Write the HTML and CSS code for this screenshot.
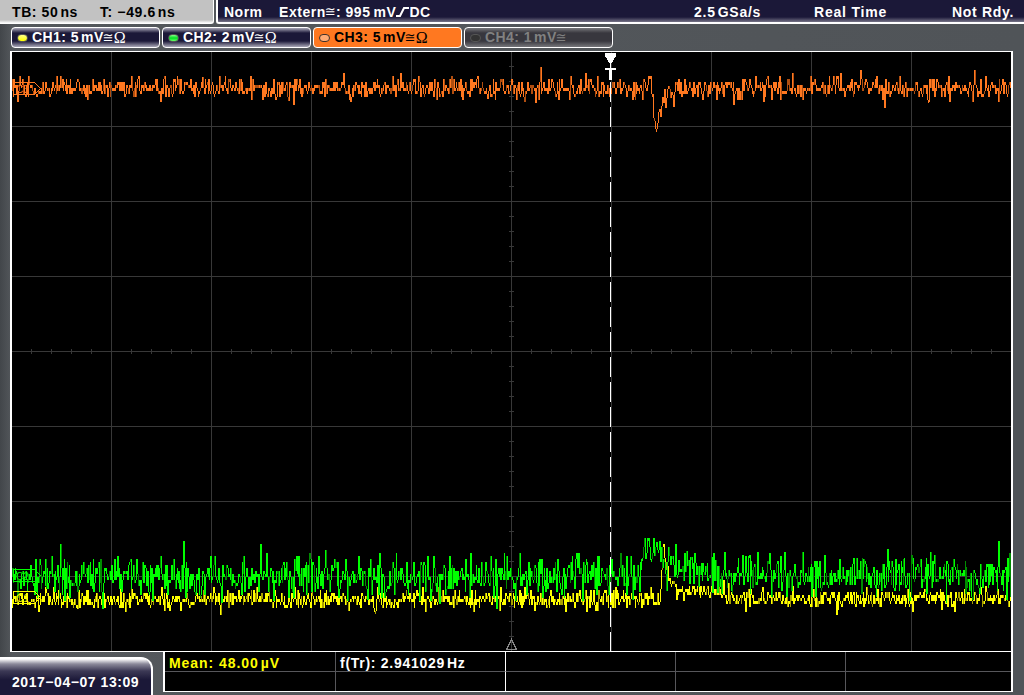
FILE: index.html
```html
<!DOCTYPE html>
<html lang="en">
<head>
<meta charset="utf-8">
<title>Oscilloscope</title>
<link rel="stylesheet" href="styles.css">
</head>
<body>
<div class="scope">
  <header class="status">
    <div class="timebase"><span class="tb">TB: 50<i></i>ns</span><span class="tpos">T: −49.6<i></i>ns</span></div>
    <div class="trigger">
      <span class="mode">Norm</span>
      <span class="source">Extern<b class="cong">≅</b>: 995<i></i>mV<svg class="edge" width="13" height="12"><path d="M0 10H4L8 2H13" fill="none" stroke="#fff" stroke-width="2"/></svg>DC</span>
      <span class="rate">2.5<i></i>GSa/s</span>
      <span class="acq">Real Time</span>
      <span class="ready">Not Rdy.</span>
    </div>
  </header>
  <nav class="channels">
    <div class="channel ch1"><span class="led"></span><span>CH1: 5<i></i>mV</span><b class="cong">≅</b><b class="ohm">Ω</b></div>
    <div class="channel ch2"><span class="led"></span><span>CH2: 2<i></i>mV</span><b class="cong">≅</b><b class="ohm">Ω</b></div>
    <div class="channel ch3"><span class="led"></span><span>CH3: 5<i></i>mV</span><b class="cong">≅</b><b class="ohm">Ω</b></div>
    <div class="channel ch4"><span class="led"></span><span>CH4: 1<i></i>mV</span><b class="cong">≅</b></div>
  </nav>
  <main class="screen"><svg id="plot" width="999" height="599" viewBox="12 52 999 599" shape-rendering="crispEdges"></svg></main>
  <footer class="bottom">
    <div class="date">2017−04−07 13:09</div>
    <div class="measure">
      <div class="cell mean">Mean: 48.00<i></i>µV</div><div class="cell freq">f(Tr): 2.941029<i></i>Hz</div><div class="cell"></div><div class="cell"></div><div class="cell last"></div>
      <div class="cell low"></div><div class="cell low freq"></div><div class="cell low"></div><div class="cell low"></div><div class="cell low last"></div>
    </div>
  </footer>
</div>
<script src="plot.js"></script>
</body>
</html>
```
FILE: styles.css
```css
* { box-sizing: border-box; }
body { margin: 0; background: #505458; font: bold 14px "Liberation Sans", Arial, sans-serif; color: #fff; }
.scope { width: 1024px; height: 695px; overflow: hidden; display: flex; flex-direction: column; background: linear-gradient(90deg, #42464a 0, #54585c 12px, #505458 100%); }
i { display: inline-block; width: 2px; }
.status { height: 24px; flex: none; display: flex; gap: 2px; white-space: nowrap; line-height: 25px; letter-spacing: .5px; }
.timebase { width: 214px; padding-left: 12px; display: flex; background: linear-gradient(#c2c2c2 20px, #fff 23px); border-right: 1px solid #fff; border-bottom: 1px solid #fff; border-bottom-right-radius: 3px; color: #000; }
.tb { width: 88px; letter-spacing: .6px; }
.tpos { letter-spacing: .6px; }
.trigger { width: 808px; padding-left: 6px; display: flex; background: linear-gradient(#1b1838 17px, #777488 22px); border-left: 2px solid #fff; border-bottom: 2px solid #fff; border-bottom-left-radius: 3px; }
.mode { width: 55px; }
.source { width: 415px; display: flex; white-space: pre; letter-spacing: .55px; }
.source i { width: 3px; }
.rate { width: 120px; letter-spacing: .75px; }
.acq { width: 138px; letter-spacing: .8px; }
.ready { letter-spacing: .7px; }
.cong { display: inline-block; width: 10px; font: 13px/20px "DejaVu Sans", sans-serif; letter-spacing: 0; text-indent: -1px; }
.source .cong { line-height: 24px; }
.edge { margin: 6px 0 0; }
.channels { flex: none; height: 27px; padding: 3px 0 0 11px; display: flex; gap: 2px; }
.channel { width: 149px; height: 21px; padding-left: 5px; display: flex; align-items: center; white-space: pre; border: 1px solid #fff; border-radius: 4px; background: linear-gradient(#aaa8b8, #1b1838 5px, #1b1838 13px, #aaa8b8); letter-spacing: .45px; line-height: 21px; }
.led { width: 11px; height: 8px; margin-right: 4px; border: 1px solid #555; border-radius: 4px; }
.ch1 .led { background: linear-gradient(#ff8, #ff0); }
.ch2 .led { background: linear-gradient(#8f8, #0d2 50%, #6f6); }
.ch3 { background: #ff7820; color: #000; }
.ch3 .led { border-color: #40312a; background: #ffab75; }
.ch4 { background: linear-gradient(#77777b, #38373e 5px, #38373e 13px, #77777b); color: #818181; }
.ch4 .led { background: #333; }
.ohm { width: 13px; font: 16px/20px "Liberation Serif", serif; letter-spacing: 0; }
.screen { flex: none; width: 1003px; height: 601px; margin-left: 10px; border: 1px solid #fff; border-width: 1px 2px; }
.screen svg { display: block; }
.bottom { flex: none; height: 43px; display: flex; align-items: flex-start; gap: 10px; }
.date { width: 153px; height: 38px; margin-top: 5px; padding: 16px 0 0 12px; line-height: 17px; border-top: 1px solid #fff; border-right: 2px solid #fff; border-radius: 0 12px 0 0; background: linear-gradient(#fff 1px, #8b899a 6px, #3c3955 13px, #1b1838 22px); letter-spacing: .55px; white-space: nowrap; }
.measure { width: 850px; height: 40px; display: grid; grid-template-columns: 171px 170px 170px 170px 165px; grid-template-rows: 20px 19px; background: #000; border: 0 solid #fff; border-width: 0 2px 1px; }
.cell { border-right: 1px solid #57575b; border-bottom: 1px solid #57575b; padding-left: 4px; line-height: 23px; white-space: nowrap; letter-spacing: .72px; }
.low { border-bottom: 0; }
.freq { border-right-color: #fff; }
.last { border-right: 0; }
.mean { color: #ff0; letter-spacing: .95px; }
```
FILE: plot.js
```js
const svg = document.getElementById('plot');
function add(name, attrs, text) {
  const e = document.createElementNS('http://www.w3.org/2000/svg', name);
  for (const k in attrs) e.setAttribute(k, attrs[k]);
  if (text) e.textContent = text;
  svg.appendChild(e);
}
add('rect', {x: 12, y: 52, width: 1000, height: 599, fill: '#000'});

// Graticule and centre-axis ticks
let grid = '';
for (let x = 111; x < 1000; x += 100) grid += `M${x} 52h1v599h-1z`;
for (let y = 126; y < 650; y += 75) grid += `M12 ${y}h1000v1h-1000z`;
for (let x = 31; x < 1010; x += 20) grid += `M${x} 349h1v5h-1z`;
for (let y = 66; y < 650; y += 15) grid += `M509 ${y}h5v1h-5z`;
add('path', {d: grid, fill: '#383838'});

function generator(seed) {
  return () => {
    seed = (seed * 1664525 + 1013904223) >>> 0;
    return seed / 4294967296;
  };
}

// Draws one sampled channel as vertical columns; some columns hold two samples
function trace(seed, mean, spread, peaks, color, dark) {
  const rnd = generator(seed), peak = new Map(peaks);
  const sample = x => mean(x) + Math.round((rnd() + rnd() + rnd() - 1.5) * spread / 3) * 3;
  let bright = '', dim = '', prev = mean(12);
  for (let x = 12; x < 1012; x++) {
    const y = peak.has(x) ? peak.get(x) : sample(x);
    const extra = rnd() < .3 && !(x > 640 && x < 675) ? sample(x) : y;
    const top = Math.min(y, prev, extra), h = Math.max(3, Math.max(y, prev, extra) - top);
    const part = `M${x} ${top}h1v${h}h-1z`;
    if (rnd() < .2) dim += part; else bright += part;
    prev = y;
  }
  add('path', {d: dim, fill: dark});
  add('path', {d: bright, fill: color});
}

trace(71, x => x < 660 ? 599 : x < 668 ? 572 : x < 676 ? 584 : x < 725 ? 592 : 598, 9.5,
  [[38,612],[45,587],[77,609],[125,612],[131,589],[213,587],[220,615],[294,587],[374,612],[425,612],[438,587],[473,612],[565,612],[586,612],[615,587],[660,589],[661,570],[662,547],[663,544],[664,558],[665,562],[666,570],[676,600],[728,583],[745,612],[762,587],[836,615],[866,587],[912,612],[954,612],[980,587]], '#ff0', '#a8a000');
trace(19, x => x < 642 ? 577 : x < 662 ? 553 : x < 675 ? 565 : x < 720 ? 572 : 576, 20,
  [[45,559],[60,544],[64,601],[100,559],[102,609],[117,556],[136,559],[152,601],[183,541],[214,556],[221,603],[260,544],[266,553],[298,556],[310,559],[358,556],[367,600],[379,553],[392,562],[433,556],[449,556],[490,556],[496,609],[506,556],[539,559],[557,559],[576,553],[582,601],[630,556],[632,600],[634,590],[636,583],[638,577],[640,570],[642,558],[644,538],[647,538],[650,560],[653,538],[656,542],[666,591],[675,544],[684,553],[694,553],[713,553],[745,556],[748,556],[769,553],[771,597],[780,556],[839,559],[863,559],[895,559],[903,559],[909,601],[920,559],[953,559],[971,597],[998,541],[1009,553],[1010,597]], '#0f0', '#008c00');
trace(43, x => x > 651 && x < 662 ? 115 : x < 675 && x > 661 ? 95 : 88, 10,
  [[17,102],[56,76],[60,76],[131,76],[138,76],[160,102],[164,76],[202,77],[219,76],[288,101],[293,105],[343,73],[350,102],[400,73],[451,76],[477,76],[487,99],[524,102],[540,67],[569,100],[585,73],[652,94],[653,118],[654,121],[655,129],[656,129],[657,123],[658,112],[659,109],[660,117],[661,106],[662,97],[663,103],[665,108],[733,105],[755,76],[763,102],[779,76],[792,73],[810,76],[836,76],[840,73],[860,70],[876,76],[884,108],[899,76],[928,102],[948,76],[949,102],[972,102],[974,70],[985,76],[998,102]], '#ff7820', '#b04e10');

// Channel position markers
[[82, '#ff7820', 'C3'], [569, '#0f0', 'C2'], [591, '#ff0', 'C1']].forEach(([y, c, t]) => {
  add('path', {d: `M13.5 ${y + .5}h21l6 6l-6 6h-21z`, fill: 'none', stroke: c});
  add('text', {x: 16, y: y + 10.5, fill: c, 'font-size': 10, 'font-weight': 400, 'font-family': 'Liberation Sans, sans-serif'}, t);
});

// Trigger position
add('path', {d: 'M610.5 62V651', stroke: '#fff', 'stroke-dasharray': '20 5', 'stroke-dashoffset': 5});
add('path', {d: 'M605 53h11v3l-5 8h-1l-5-8zM605 68h11v2h-4v10h-3v-10h-4z', fill: '#fff'});
add('path', {d: 'M511.5 639.5L506.5 649.5H516.5Z', fill: 'none', stroke: '#888'});
```
